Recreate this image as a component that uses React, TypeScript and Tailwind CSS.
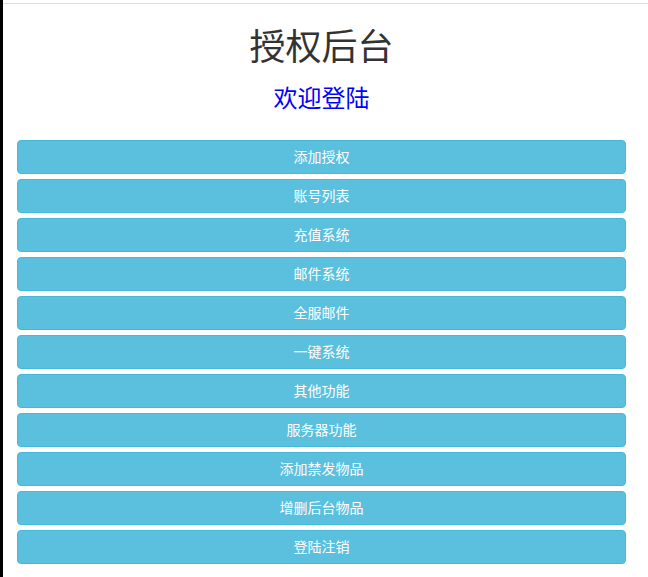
const items = [
  '添加授权',
  '账号列表',
  '充值系统',
  '邮件系统',
  '全服邮件',
  '一键系统',
  '其他功能',
  '服务器功能',
  '添加禁发物品',
  '增删后台物品',
  '登陆注销',
]

export default function App() {
  return (
    <div
      className="min-h-screen bg-white border-l-[3px] border-black"
      style={{ fontFamily: '"Noto Sans CJK SC", "Noto Sans", sans-serif' }}
    >
      <div className="pt-[3px]">
        <div className="border-t border-[#dddddd]" />
      </div>
      <div className="pl-[14px] pr-[22px]">
        <h1 className="mt-[20px] text-center text-[36px] leading-[40px] font-normal text-[#333333]">
          授权后台
        </h1>
        <h3 className="mt-[19px] text-center text-[24px] leading-[28px] font-normal text-[#0000ff]">
          欢迎登陆
        </h3>
        <div className="mt-[29px] flex flex-col gap-[5px]">
          {items.map((label) => (
            <button
              key={label}
              className="h-[34px] w-full rounded-[4px] border border-[#46b8da] bg-[#5bc0de] pb-[2px] text-[14px] leading-[20px] text-white"
            >
              {label}
            </button>
          ))}
        </div>
      </div>
    </div>
  )
}
